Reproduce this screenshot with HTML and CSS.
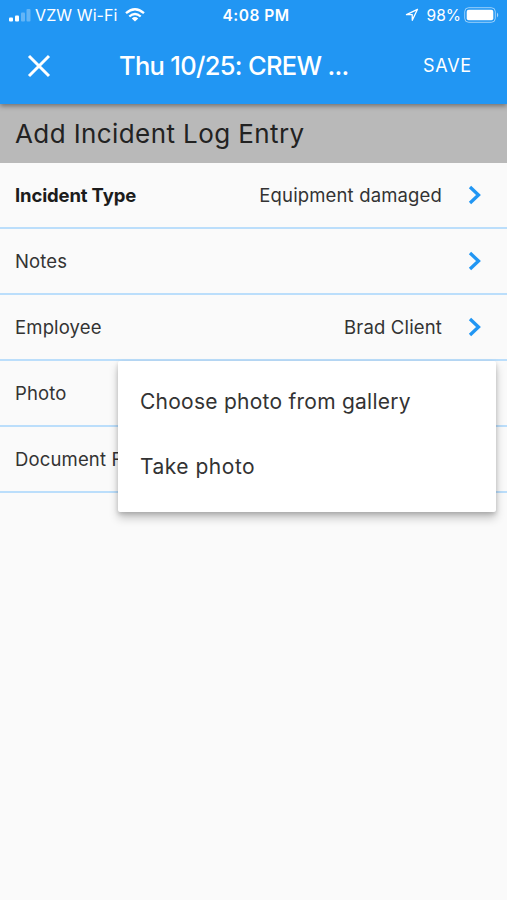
FILE: index.html
```html
<!DOCTYPE html>
<html lang="en">
<head>
<meta charset="utf-8">
<title>Add Incident Log Entry</title>
<link rel="stylesheet" href="styles.css">
</head>
<body>
<header class="app-bar">
  <div class="status">
    <div class="status-left">
      <svg class="signal" width="22" height="13" viewBox="0 0 22 13" fill="#fff"><rect x="0" y="8.500" width="4" height="4" rx="1"/><rect x="6" y="6.500" width="4" height="6" rx="1"/><rect x="12" y="3.500" width="4" height="9" rx="1" opacity=".3"/><rect x="17.500" y="0" width="4" height="12.500" rx="1" opacity=".3"/></svg>
      <span class="carrier">VZW Wi-Fi</span>
      <svg class="wifi" width="20" height="14" viewBox="0 0 20 14" fill="none" stroke="#fff" stroke-width="2.300"><path d="M1 5.200Q10-2.800 19 5.200"/><path d="M4.300 8.500Q10 3.500 15.700 8.500"/><path d="M6.800 10.400Q10 7.700 13.200 10.400L10 13.600Z" fill="#fff" stroke="none"/></svg>
    </div>
    <span class="clock">4:08 PM</span>
    <div class="status-right">
      <svg class="location" width="14" height="14" viewBox="0 0 14 14" fill="none" stroke="#fff" stroke-width="1.300" stroke-linejoin="round"><path d="M12.500 1.300L1.500 6.600H7.200L7.300 12.300Z"/></svg>
      <span class="percent">98%</span>
      <svg class="battery" width="35" height="16" viewBox="0 0 35 16"><rect x=".7" y=".7" width="30.600" height="14.600" rx="4" fill="none" stroke="#fff" opacity=".55"/><rect x="2.700" y="2.700" width="26.600" height="10.600" rx="2" fill="#fff"/><path d="M33 5.500Q35.500 8 33 10.500Z" fill="#fff" opacity=".6"/></svg>
    </div>
  </div>
  <div class="toolbar">
    <svg class="close" width="24" height="24" viewBox="0 0 24 24" fill="none" stroke="#fff" stroke-width="3"><path d="M2 2L22 22M22 2L2 22"/></svg>
    <h1 class="title">Thu 10/25: CREW ...</h1>
    <span class="save">SAVE</span>
  </div>
</header>
<main>
  <h2 class="section">Add Incident Log Entry</h2>
  <div class="row"><span class="label required">Incident Type</span><span class="value">Equipment damaged</span><svg class="chevron" width="14" height="20" viewBox="0 0 14 20"><path d="M2 2L10.500 10L2 18"/></svg></div>
  <div class="row"><span class="label">Notes</span><span class="value"></span><svg class="chevron" width="14" height="20" viewBox="0 0 14 20"><path d="M2 2L10.500 10L2 18"/></svg></div>
  <div class="row"><span class="label">Employee</span><span class="value">Brad Client</span><svg class="chevron" width="14" height="20" viewBox="0 0 14 20"><path d="M2 2L10.500 10L2 18"/></svg></div>
  <div class="row"><span class="label">Photo</span></div>
  <div class="row"><span class="label">Document File</span></div>
</main>
<div class="menu">
  <div class="menu-item">Choose photo from gallery</div>
  <div class="menu-item take">Take photo</div>
</div>
</body>
</html>
```

FILE: styles.css
```css
* { box-sizing: border-box; }
body {
  position: relative;
  margin: 0;
  height: 900px;
  overflow: hidden;
  background: #fafafa;
  color: #333;
  font-family: Inter, "Liberation Sans", sans-serif;
}
svg { display: block; flex: none; }
.app-bar {
  position: relative;
  z-index: 1;
  height: 104px;
  background: #2196f3;
  color: #fff;
  box-shadow: 0 2px 5px rgba(0, 0, 0, .4);
}
.status {
  display: grid;
  grid-template-columns: 1fr auto 1fr;
  align-items: center;
  height: 30px;
  padding: 0 8px 0 9px;
  font-size: 16px;
}
.status-left, .status-right { display: flex; align-items: center; }
.status-right { justify-content: flex-end; }
.carrier { margin-left: 4px; letter-spacing: .1px; }
.wifi { margin-left: 7px; }
.clock { margin-left: 4px; font-size: 15.500px; font-weight: 600; letter-spacing: .5px; }
.percent { margin: 0 3px 0 8px; font-size: 15.500px; }
.toolbar {
  display: grid;
  grid-template-columns: 92px 1fr 84px;
  align-items: center;
  height: 71px;
  padding-left: 27px;
}
.title { margin: 0; font-size: 25.500px; font-weight: 500; letter-spacing: -.7px; white-space: nowrap; }
.save { font-size: 18px; letter-spacing: .7px; }
.section {
  display: flex;
  align-items: center;
  height: 59px;
  margin: 0;
  padding-left: 15px;
  background: #b9b9b9;
  color: #222;
  font-size: 26px;
  font-weight: 400;
  letter-spacing: .4px;
}
.row {
  display: flex;
  align-items: center;
  height: 66px;
  padding: 0 25px 0 15px;
  border-bottom: 2px solid #bbdefb;
  font-size: 18.500px;
  letter-spacing: .15px;
  white-space: nowrap;
}
.required { color: #1c1c1c; font-weight: 700; letter-spacing: -.15px; }
.value { margin-left: auto; }
.chevron { margin-left: 26px; fill: none; stroke: #2196f3; stroke-width: 3.300; }
.menu {
  position: absolute;
  top: 361px;
  left: 118px;
  z-index: 2;
  width: 378px;
  height: 151px;
  padding-top: 8px;
  padding-left: 22px;
  border-radius: 2px;
  background: #fff;
  box-shadow: 0 6px 10px rgba(0, 0, 0, .22), 0 2px 4px rgba(0, 0, 0, .16);
}
.menu-item { display: flex; align-items: center; height: 65px; font-size: 21px; letter-spacing: .25px; }
.take { letter-spacing: .5px; }
```
